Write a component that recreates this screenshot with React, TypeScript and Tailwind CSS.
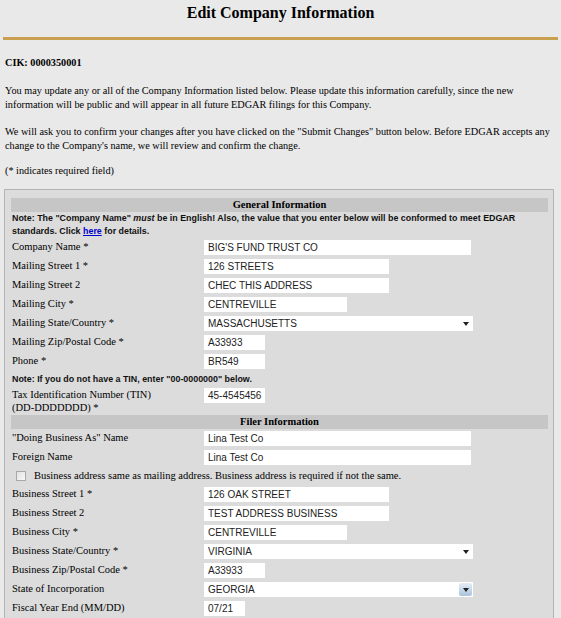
import React from 'react';

type Field = {
  label: React.ReactNode;
  value: string;
  width: number;
  select?: boolean;
  hover?: boolean;
};

const generalFields: Field[] = [
  { label: 'Company Name *', value: "BIG'S FUND TRUST CO", width: 267 },
  { label: 'Mailing Street 1 *', value: '126 STREETS', width: 185 },
  { label: 'Mailing Street 2', value: 'CHEC THIS ADDRESS', width: 185 },
  { label: 'Mailing City *', value: 'CENTREVILLE', width: 143 },
  { label: 'Mailing State/Country *', value: 'MASSACHUSETTS', width: 269, select: true },
  { label: 'Mailing Zip/Postal Code *', value: 'A33933', width: 61 },
  { label: 'Phone *', value: 'BR549', width: 61 },
];

const filerTop: Field[] = [
  { label: '"Doing Business As" Name', value: 'Lina Test Co', width: 267 },
  { label: 'Foreign Name', value: 'Lina Test Co', width: 267 },
];

const filerBottom: Field[] = [
  { label: 'Business Street 1 *', value: '126 OAK STREET', width: 185 },
  { label: 'Business Street 2', value: 'TEST ADDRESS BUSINESS', width: 185 },
  { label: 'Business City *', value: 'CENTREVILLE', width: 143 },
  { label: 'Business State/Country *', value: 'VIRGINIA', width: 269, select: true },
  { label: 'Business Zip/Postal Code *', value: 'A33933', width: 61 },
  { label: 'State of Incorporation', value: 'GEORGIA', width: 269, select: true, hover: true },
  { label: 'Fiscal Year End (MM/DD)', value: '07/21', width: 41 },
];

const serif = "font-['Liberation_Serif','Times_New_Roman',serif]";
const sans = "font-['Liberation_Sans',Arial,sans-serif]";

const Box: React.FC<{ f: Field }> = ({ f }) => (
  <div
    className={`relative h-[15px] bg-white flex items-center pl-[4px] ${sans} text-[10px] text-[#222] leading-none`}
    style={{ width: f.width }}
  >
    {f.value}
    {f.select && (
      <span
        className={`absolute right-[1px] top-[1px] bottom-[1px] w-[13px] flex items-center justify-center ${
          f.hover ? 'bg-gradient-to-b from-[#e6eef6] to-[#a9c3dc] rounded-[2px]' : ''
        }`}
      >
        <svg width="6" height="4" viewBox="0 0 6 4">
          <path d="M0 0h6L3 4z" fill="#222" />
        </svg>
      </span>
    )}
  </div>
);

const Row: React.FC<{ f: Field }> = ({ f }) => (
  <div className="grid grid-cols-[193px_1fr] h-[19px] items-center">
    <div className={`pl-[1px] ${serif} text-[10.5px] leading-none`}>{f.label}</div>
    <Box f={f} />
  </div>
);

const Bar: React.FC<{ title: string }> = ({ title }) => (
  <div className={`h-[14px] bg-[#c6c6c6] flex items-center justify-center ${serif} font-bold text-[10.5px] leading-none`}>
    {title}
  </div>
);

export default function App() {
  return (
    <div className={`min-h-screen bg-[#e9e9e9] text-black ${serif}`}>
      <h1 className="text-center font-bold text-[16px] leading-[22px] pt-[2px]">Edit Company Information</h1>
      <div className="mx-[3px] mt-[13px] h-[3px] bg-[#c8a050]" />

      <div className="px-[5px] text-[10.25px] leading-[14px]">
        <p className="mt-[16px] font-bold">CIK: 0000350001</p>
        <p className="mt-[14px]">
          You may update any or all of the Company Information listed below. Please update this information carefully, since the new
          information will be public and will appear in all future EDGAR filings for this Company.
        </p>
        <p className="mt-[13px]">
          We will ask you to confirm your changes after you have clicked on the "Submit Changes" button below. Before EDGAR accepts any
          change to the Company's name, we will review and confirm the change.
        </p>
        <p className="mt-[11px]">(* indicates required field)</p>
      </div>

      <div className="ml-[4px] w-[550px] mt-[11px] border border-[#b3b3b3] bg-[#dcdcdc] pl-[6px] pr-[5px] pt-[8px] pb-[4px]">
        <Bar title="General Information" />
        <div className={`pl-[1px] ${sans} font-bold text-[8.9px] leading-[13px] text-[#111]`}>
          <p>
            Note: The "Company Name" <i>must</i> be in English! Also, the value that you enter below will be conformed to meet EDGAR
          </p>
          <p>
            standards. Click{' '}
            <a href="#" className="text-[#0000cc] underline">
              here
            </a>{' '}
            for details.
          </p>
        </div>
        {generalFields.map((f, i) => (
          <Row key={i} f={f} />
        ))}
        <p className={`pl-[1px] ${sans} font-bold text-[8.9px] leading-[16px] text-[#111]`}>
          Note: If you do not have a TIN, enter "00-0000000" below.
        </p>
        <div className="grid grid-cols-[193px_1fr] pt-[1px] pb-[1px]">
          <div className={`pl-[1px] text-[10.5px] leading-[13px]`}>
            Tax Identification Number (TIN)
            <br />
            (DD-DDDDDDD) *
          </div>
          <Box f={{ label: '', value: '45-4545456', width: 61 }} />
        </div>
        <Bar title="Filer Information" />
        {filerTop.map((f, i) => (
          <Row key={i} f={f} />
        ))}
        <div className="h-[18px] flex items-center pl-[5px] gap-[8px] text-[10.5px] leading-none">
          <span className="w-[10px] h-[10px] border border-[#a8a8a8] bg-gradient-to-br from-[#e2e2e2] to-[#f8f8f8]" />
          Business address same as mailing address. Business address is required if not the same.
        </div>
        {filerBottom.map((f, i) => (
          <Row key={i} f={f} />
        ))}
      </div>
    </div>
  );
}
